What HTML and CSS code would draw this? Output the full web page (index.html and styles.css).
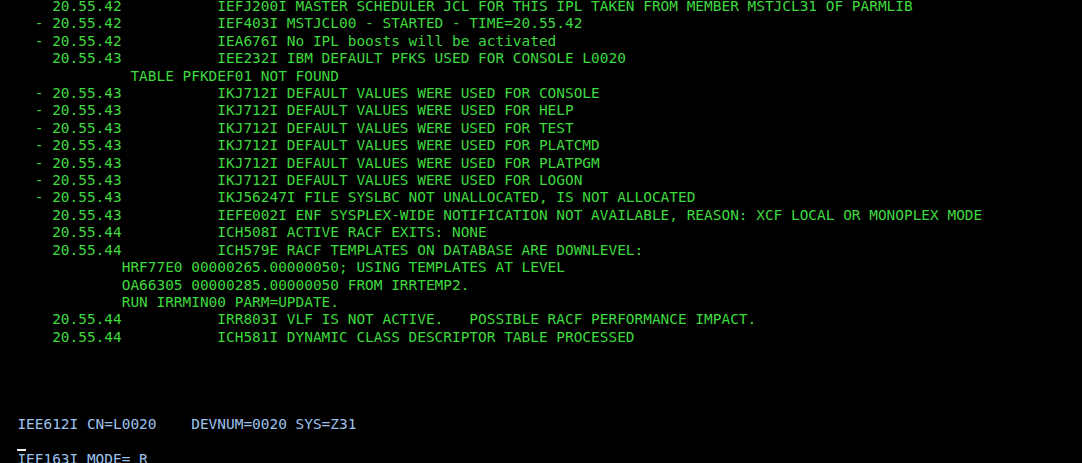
FILE: index.html
```html
<!DOCTYPE html>
<html>
<head>
<meta charset="utf-8">
<link rel="stylesheet" href="styles.css">
</head>
<body>
<pre class="screen"><span class="g">      20.55.42           IEFJ200I MASTER SCHEDULER JCL FOR THIS IPL TAKEN FROM MEMBER MSTJCL31 OF PARMLIB
    - 20.55.42           IEF403I MSTJCL00 - STARTED - TIME=20.55.42
    - 20.55.42           IEA676I No IPL boosts will be activated
      20.55.43           IEE232I IBM DEFAULT PFKS USED FOR CONSOLE L0020
               TABLE PFKDEF01 NOT FOUND
    - 20.55.43           IKJ712I DEFAULT VALUES WERE USED FOR CONSOLE
    - 20.55.43           IKJ712I DEFAULT VALUES WERE USED FOR HELP
    - 20.55.43           IKJ712I DEFAULT VALUES WERE USED FOR TEST
    - 20.55.43           IKJ712I DEFAULT VALUES WERE USED FOR PLATCMD
    - 20.55.43           IKJ712I DEFAULT VALUES WERE USED FOR PLATPGM
    - 20.55.43           IKJ712I DEFAULT VALUES WERE USED FOR LOGON
    - 20.55.43           IKJ56247I FILE SYSLBC NOT UNALLOCATED, IS NOT ALLOCATED
      20.55.43           IEFE002I ENF SYSPLEX-WIDE NOTIFICATION NOT AVAILABLE, REASON: XCF LOCAL OR MONOPLEX MODE
      20.55.44           ICH508I ACTIVE RACF EXITS: NONE
      20.55.44           ICH579E RACF TEMPLATES ON DATABASE ARE DOWNLEVEL:
              HRF77E0 00000265.00000050; USING TEMPLATES AT LEVEL
              OA66305 00000285.00000050 FROM IRRTEMP2.
              RUN IRRMIN00 PARM=UPDATE.
      20.55.44           IRR803I VLF IS NOT ACTIVE.   POSSIBLE RACF PERFORMANCE IMPACT.
      20.55.44           ICH581I DYNAMIC CLASS DESCRIPTOR TABLE PROCESSED</span>




<span class="b">  IEE612I CN=L0020    DEVNUM=0020 SYS=Z31</span>
  <span class="cursor"> </span>
<span class="b">  IEF163I MODE= R</span>
</pre>
</body>
</html>
```
FILE: styles.css
```css
html, body {
  margin: 0;
  padding: 0;
  background: #000000;
  height: 100%;
  overflow: hidden;
}
.screen {
  margin: 0;
  padding: 0;
  position: relative;
  top: -2px;
  font-family: "DejaVu Sans Mono", monospace;
  font-size: 14.45px;
  line-height: 17.4px;
  white-space: pre;
  color: #3fd93f;
}
.g {
  color: #3fd83f;
}
.b {
  color: #9ec2ee;
}
.cursor {
  display: inline-block;
  width: 8.7px;
  height: 14px;
  vertical-align: -4px;
  box-sizing: border-box;
  border-bottom: 2px solid #f0f0f0;
}
```
